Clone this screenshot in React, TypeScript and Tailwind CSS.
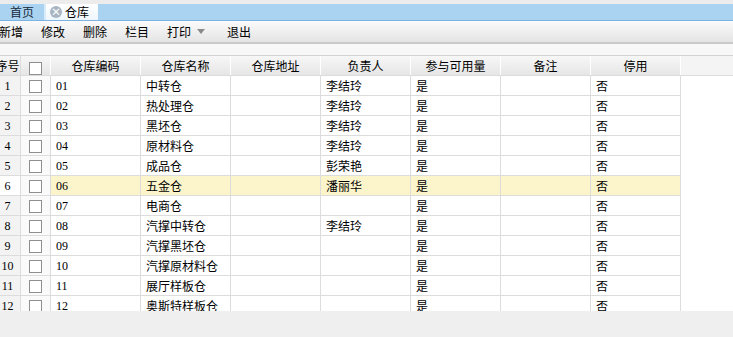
import React from "react";

interface Row {
  code: string;
  name: string;
  owner: string;
}

const rows: Row[] = [
  { code: "01", name: "中转仓", owner: "李结玲" },
  { code: "02", name: "热处理仓", owner: "李结玲" },
  { code: "03", name: "黑坯仓", owner: "李结玲" },
  { code: "04", name: "原材料仓", owner: "李结玲" },
  { code: "05", name: "成品仓", owner: "彭荣艳" },
  { code: "06", name: "五金仓", owner: "潘丽华" },
  { code: "07", name: "电商仓", owner: "" },
  { code: "08", name: "汽撑中转仓", owner: "李结玲" },
  { code: "09", name: "汽撑黑坯仓", owner: "" },
  { code: "10", name: "汽撑原材料仓", owner: "" },
  { code: "11", name: "展厅样板仓", owner: "" },
  { code: "12", name: "奥斯特样板仓", owner: "" },
];

const headers = ["仓库编码", "仓库名称", "仓库地址", "负责人", "参与可用量", "备注", "停用"];
const toolbar = ["新增", "修改", "删除", "栏目"];

const Box = ({ className = "" }: { className?: string }) => (
  <span className={`block w-[13px] h-[13px] border border-[#8f8f8f] bg-white ${className}`} />
);

const App: React.FC = () => {
  const font = { fontFamily: '"Liberation Serif", "Noto Sans CJK SC", serif' };
  return (
    <div
      className="w-[733px] h-[337px] overflow-hidden bg-[#efefef] flex flex-col text-[12px] text-black"
      style={{ fontFamily: '"Noto Sans CJK SC", "Liberation Sans", sans-serif' }}
    >
      {/* tabs */}
      <div className="h-[4px] bg-[#ececec]" />
      <div className="h-[17px] flex bg-[#a9d3f1] border-b border-[#7db3e3]">
        <div className="w-[46px] flex items-center pl-[10px] border-r-2 border-[#d8ebf9] text-[#1a2a3a] leading-none">
          首页
        </div>
        <div className="w-[52px] flex items-center bg-gradient-to-b from-white to-[#eef6fd] pl-[4px] gap-[3px] leading-none">
          <span className="w-[12px] h-[12px] rounded-full bg-[#a9b5c2] flex items-center justify-center text-white text-[10px] font-bold leading-none">
            ×
          </span>
          <span>仓库</span>
        </div>
      </div>
      {/* toolbar */}
      <div className="h-[23px] flex items-center bg-gradient-to-b from-[#fbfbfb] to-[#e4e4e4] border-b-2 border-[#c9c9c9] -ml-[1px] leading-none">
        {toolbar.map((t) => (
          <span key={t} className="mr-[18px]">
            {t}
          </span>
        ))}
        <span className="flex items-center mr-[22px]">
          打印
          <span className="ml-[6px] inline-block w-0 h-0 border-l-[4px] border-r-[4px] border-t-[5px] border-l-transparent border-r-transparent border-t-[#8a8a8a]" />
        </span>
        <span>退出</span>
      </div>
      <div className="h-[11px] bg-[#f8f8f8]" />
      {/* grid */}
      <div className="h-[256px] overflow-hidden bg-white -ml-[5px] w-[738px] border-t border-[#d2d2d2]">
        <div className="flex h-[20px] bg-[#f4f4f4] border-b border-[#dcdcdc] leading-none">
          <div className="w-[26px] flex items-center justify-center bg-gradient-to-b from-[#f7f7f7] to-[#e6e6e6] border-r border-[#dcdcdc]">
            序号
          </div>
          <div className="w-[30px] flex justify-center pt-[6px] bg-gradient-to-b from-[#f7f7f7] to-[#e6e6e6] border-r border-white">
            <Box />
          </div>
          {headers.map((h) => (
            <div
              key={h}
              className="w-[90px] flex items-center justify-center bg-gradient-to-b from-[#f7f7f7] to-[#e6e6e6] border-r border-white"
            >
              {h}
            </div>
          ))}
        </div>
        {rows.map((r, i) => {
          const hl = i === 5;
          const cell = `w-[90px] h-full flex items-center pl-[5px] border-r border-[#dcdcdc] border-b ${
            hl ? "bg-[#fcf5cc]" : ""
          }`;
          return (
            <div key={r.code} className="flex h-[20px] leading-none">
              <div
                className={`w-[26px] h-full flex items-center justify-center border-r border-b border-[#dcdcdc] ${
                  hl ? "bg-white" : "bg-[#f3f3f3]"
                }`}
                style={font}
              >
                {i + 1}
              </div>
              <div className="w-[30px] h-full flex items-center justify-center border-r border-b border-[#dcdcdc] bg-[#fafafa]">
                <Box className="mt-[2px]" />
              </div>
              <div className={cell} style={font}>
                {r.code}
              </div>
              <div className={cell}>{r.name}</div>
              <div className={cell} />
              <div className={cell}>{r.owner}</div>
              <div className={cell}>是</div>
              <div className={cell} />
              <div className={cell}>否</div>
            </div>
          );
        })}
      </div>
    </div>
  );
};

export default App;
